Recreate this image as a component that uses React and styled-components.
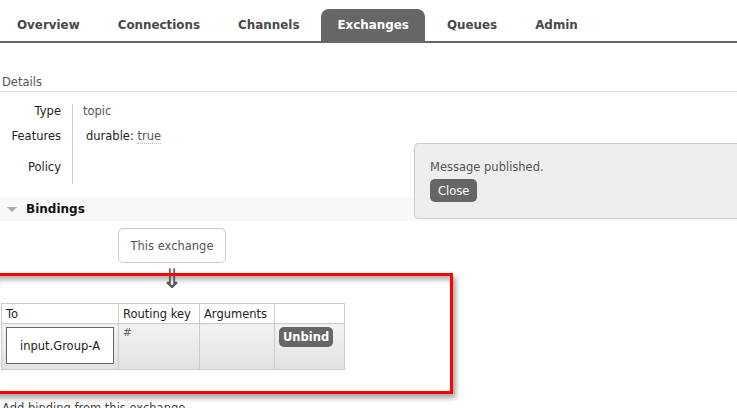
import React from 'react';
import styled, { createGlobalStyle } from 'styled-components';

const GlobalStyle = createGlobalStyle`
  html, body {
    margin: 0;
    padding: 0;
    background: #fff;
  }
  body {
    font: 400 11.5px "DejaVu Sans", Verdana, sans-serif;
    color: #484848;
    overflow: hidden;
  }
`;

const Page = styled.div`
  position: relative;
  width: 737px;
  height: 408px;
  overflow: hidden;
`;

const Tabs = styled.ul`
  display: flex;
  gap: 6px;
  margin: 0;
  padding: 9px 0 0 1px;
  list-style: none;
  border-bottom: 2px solid #666;
`;

const Tab = styled.li`
  height: 32px;
  padding: 0 16px;
  display: flex;
  align-items: center;
  font: 700 11.9px "DejaVu Sans", Verdana, sans-serif;
  color: ${(p) => (p.$active ? '#fff' : '#484848')};
  background: ${(p) => (p.$active ? '#666' : 'transparent')};
  border-radius: 8px 8px 0 0;
`;

const SectionTitle = styled.div`
  margin-top: 32px;
  padding: 0 0 2px 2px;
  line-height: 14px;
  color: #555;
  border-bottom: 1px solid #ddd;
`;

const Facts = styled.div`
  display: grid;
  grid-template-columns: 73px auto;
  margin-top: 12px;
  width: 200px;
`;

const Label = styled.div`
  text-align: right;
  padding-right: 11px;
  border-right: 1px solid #ccc;
  height: ${(p) => p.$h}px;
  line-height: 14px;
  color: #222;
`;

const Value = styled.div`
  padding-left: ${(p) => p.$indent || 10}px;
  height: ${(p) => p.$h}px;
  line-height: 14px;
  color: #555;
`;

const Dotted = styled.span`
  border-bottom: 1px dotted #bbb;
`;

const Strong = styled.span`
  color: #222;
`;

const SectionBar = styled.div`
  margin-top: 13px;
  height: 24px;
  display: flex;
  align-items: center;
  gap: 9px;
  padding-left: 7px;
  background: #f8f8f8;
  font: 700 12px "DejaVu Sans", Verdana, sans-serif;
  color: #111;
`;

const Triangle = styled.span`
  width: 0;
  height: 0;
  border-left: 5px solid transparent;
  border-right: 5px solid transparent;
  border-top: 5px solid #aaa;
`;

const Flow = styled.div`
  padding-left: 118px;
  margin-top: 7px;
  display: flex;
  flex-direction: column;
  align-items: flex-start;
`;

const ExchangeBox = styled.div`
  width: 106px;
  height: 33px;
  display: flex;
  align-items: center;
  justify-content: center;
  border: 1px solid #ccc;
  border-radius: 5px;
  color: #555;
`;

const Arrow = styled.div`
  width: 108px;
  height: 26px;
  text-align: center;
  font-size: 27px;
  line-height: 26px;
  margin-top: 3px;
  color: #555;
`;

const Table = styled.table`
  margin: 11px 0 0 1px;
  border-collapse: collapse;
  table-layout: fixed;
`;

const Th = styled.th`
  width: ${(p) => p.$w}px;
  height: 19px;
  padding: 0 4px;
  text-align: left;
  font-weight: 400;
  color: #222;
  border: 1px solid #ccc;
  background: #fff;
  white-space: nowrap;
`;

const Td = styled.td`
  height: 41px;
  padding: 2px 4px;
  vertical-align: top;
  border: 1px solid #ccc;
  background: linear-gradient(#f3f3f3, #e2e2e2);
  color: #666;
  font-size: 10.5px;
  line-height: 12px;
`;

const QueueBox = styled.div`
  width: 106px;
  height: 35px;
  margin-top: 1px;
  display: flex;
  align-items: center;
  justify-content: center;
  background: #fff;
  border: 1px solid #666;
  font-size: 11.5px;
  color: #222;
`;

const Button = styled.button`
  display: block;
  border: 0;
  border-radius: 5px;
  background: #666;
  color: #fff;
  font: ${(p) => (p.$bold ? 700 : 400)} 11.5px "DejaVu Sans", Verdana, sans-serif;
  padding: 0 ${(p) => p.$px}px;
  height: ${(p) => p.$h}px;
  margin-top: ${(p) => p.$mt || 0}px;
`;

const AddLink = styled.div`
  margin-top: 31px;
  padding-left: 2px;
  line-height: 14px;
  color: #444;
`;

const Toast = styled.div`
  position: absolute;
  left: 414px;
  top: 143px;
  width: 340px;
  height: 76px;
  box-sizing: border-box;
  padding: 16px 15px 0;
  background: #eee;
  border: 1px solid #ccc;
  border-radius: 4px;
  color: #555;
  line-height: 14px;
`;

const Highlight = styled.div`
  position: absolute;
  left: -10px;
  top: 273px;
  width: 463px;
  height: 121px;
  box-sizing: border-box;
  border: 3.5px solid #f00;
  box-shadow: 3px 4px 5px rgba(0, 0, 0, 0.35),
    inset 3px 4px 5px rgba(0, 0, 0, 0.3);
  pointer-events: none;
`;

const tabs = ['Overview', 'Connections', 'Channels', 'Exchanges', 'Queues', 'Admin'];

export default function App() {
  return (
    <Page>
      <GlobalStyle />
      <Tabs>
        {tabs.map((t) => (
          <Tab key={t} $active={t === 'Exchanges'}>
            {t}
          </Tab>
        ))}
      </Tabs>

      <SectionTitle>Details</SectionTitle>
      <Facts>
        <Label $h={25}>Type</Label>
        <Value $h={25}>topic</Value>
        <Label $h={31}>Features</Label>
        <Value $h={31} $indent={13}>
          <Strong>durable:</Strong> <Dotted>true</Dotted>
        </Value>
        <Label $h={24}>Policy</Label>
        <Value $h={24} />
      </Facts>

      <SectionBar>
        <Triangle />
        Bindings
      </SectionBar>

      <Flow>
        <ExchangeBox>This exchange</ExchangeBox>
        <Arrow>⇓</Arrow>
      </Flow>

      <Table>
        <thead>
          <tr>
            <Th $w={108}>To</Th>
            <Th $w={72}>Routing key</Th>
            <Th $w={66}>Arguments</Th>
            <Th $w={61}></Th>
          </tr>
        </thead>
        <tbody>
          <tr>
            <Td>
              <QueueBox>input.Group-A</QueueBox>
            </Td>
            <Td>#</Td>
            <Td></Td>
            <Td>
              <Button $bold $h={20} $mt={1} $px={4}>Unbind</Button>
            </Td>
          </tr>
        </tbody>
      </Table>

      <AddLink>Add binding from this exchange</AddLink>

      <Toast>
        Message published.
        <Button $h={23} $mt={5} $px={8}>Close</Button>
      </Toast>

      <Highlight />
    </Page>
  );
}
